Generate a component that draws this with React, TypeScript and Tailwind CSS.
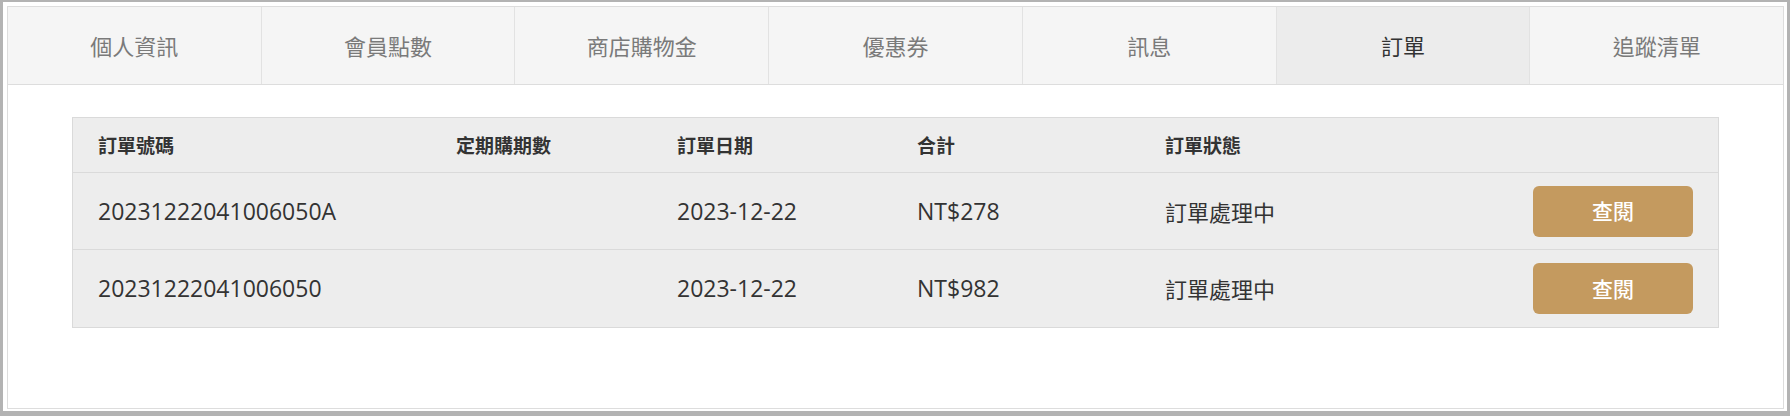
import React from "react";

const tabs = ["個人資訊", "會員點數", "商店購物金", "優惠券", "訊息", "訂單", "追蹤清單"];
const rows = [
  { id: "20231222041006050A", date: "2023-12-22", total: "NT$278", status: "訂單處理中" },
  { id: "20231222041006050", date: "2023-12-22", total: "NT$982", status: "訂單處理中" },
];

const cjk = { fontFamily: '"Noto Sans CJK TC", "Noto Sans", sans-serif' };
const latin = { fontFamily: '"Open Sans", "Noto Sans CJK TC", sans-serif' };

export default function App() {
  return (
    <div className="w-[1790px] h-[416px] bg-[#b3b3b3] pt-[2px] pl-[3px] pr-[3px] pb-[5px]">
      <div className="bg-white pt-[4px] pl-[4px] pr-[3px] pb-[2px]">
        <div className="h-[403px] border border-[#dddddd] flex flex-col">
          <div className="h-[78px] flex border-b border-[#dddddd] divide-x divide-[#e2e2e2]">
            {tabs.map((t) => (
              <div
                key={t}
                style={cjk}
                className={`flex-1 flex items-center justify-center text-[22px] ${
                  t === "訂單" ? "bg-[#ececec] text-[#333333]" : "bg-[#f5f5f5] text-[#7a7a7a]"
                }`}
              >
                {t}
              </div>
            ))}
          </div>
          <div className="px-[64px] pt-[32px]">
            <div className="border border-[#dadada] bg-[#ededed] text-[#333333]">
              <div
                style={cjk}
                className="h-[54px] grid grid-cols-[358px_221px_240px_248px_368px_1fr] items-center text-[19px] font-bold text-[#333333]"
              >
                <div className="pl-[25px]">訂單號碼</div>
                <div className="pl-[25px]">定期購期數</div>
                <div className="pl-[25px]">訂單日期</div>
                <div className="pl-[25px]">合計</div>
                <div className="pl-[25px]">訂單狀態</div>
                <div />
              </div>
              {rows.map((r, i) => (
                <div
                  key={r.id}
                  className={`${i === 0 ? "h-[77px]" : "h-[78px]"} border-t border-[#dadada] grid grid-cols-[358px_221px_240px_248px_368px_1fr] items-center`}
                >
                  <div style={latin} className="pl-[25px] text-[23px]">{r.id}</div>
                  <div />
                  <div style={latin} className="pl-[25px] text-[23px]">{r.date}</div>
                  <div style={latin} className="pl-[25px] text-[23px]">{r.total}</div>
                  <div style={cjk} className="pl-[25px] text-[22px]">{r.status}</div>
                  <div className="pl-[25px]">
                    <button
                      style={cjk}
                      className="w-[160px] h-[51px] rounded-[6px] bg-[#c49a5f] text-white text-[21px] font-medium flex items-center justify-center"
                    >
                      查閱
                    </button>
                  </div>
                </div>
              ))}
            </div>
          </div>
        </div>
      </div>
    </div>
  );
}
